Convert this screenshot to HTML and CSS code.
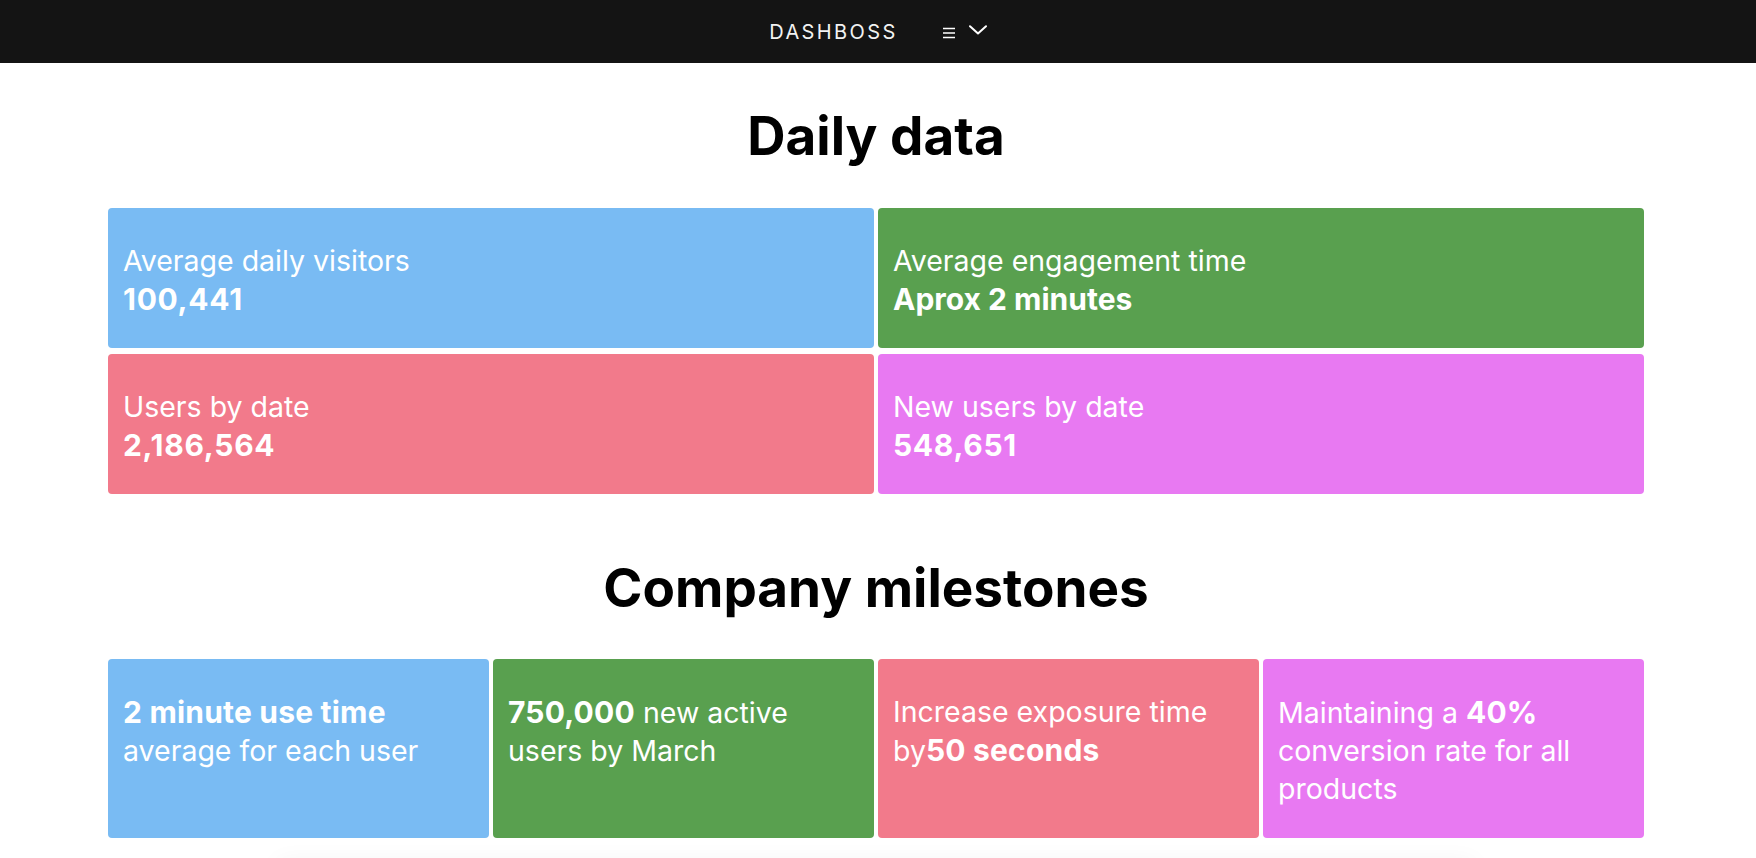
FILE: index.html
```html
<!DOCTYPE html>
<html lang="en">
<head>
<meta charset="utf-8">
<title>Dashboss</title>
<link rel="stylesheet" href="styles.css">
</head>
<body>
<header class="topbar">
  <span class="brand">DASHBOSS</span>
  <span class="menu">
    <svg class="burger" width="12" height="12" viewBox="0 0 12 12"><path d="M0 1.5H12M0 6H12M0 10.5H12" stroke="#fff" stroke-width="1.5" fill="none"/></svg>
    <svg class="chev" width="18" height="10" viewBox="0 0 18 10"><path d="M1 1.2L9 8.5L17 1.2" stroke="#fff" stroke-width="2" fill="none" stroke-linecap="round" stroke-linejoin="round"/></svg>
  </span>
</header>
<main class="page">
  <section class="section section-daily">
    <h1 class="title">Daily data</h1>
    <div class="grid grid-2">
      <div class="card blue"><div>Average daily visitors</div><div class="num">100,441</div></div>
      <div class="card green"><div>Average engagement time</div><div class="num words">Aprox 2 minutes</div></div>
      <div class="card pink"><div>Users by date</div><div class="num">2,186,564</div></div>
      <div class="card purple"><div>New users by date</div><div class="num">548,651</div></div>
    </div>
  </section>
  <section class="section section-miles">
    <h1 class="title">Company milestones</h1>
    <div class="grid grid-4">
      <div class="card blue"><b>2 minute use time</b> average for each user</div>
      <div class="card green"><b class="digits">750,000</b> new active users by March</div>
      <div class="card pink">Increase exposure time by<b class="digits">50 seconds</b></div>
      <div class="card purple">Maintaining a <b class="digits">40%</b> conversion rate for all products</div>
    </div>
  </section>
  <div class="footer-shadow"></div>
</main>
</body>
</html>
```
FILE: styles.css
```css
html, body {
  margin: 0;
  padding: 0;
  background: #ffffff;
  font-family: Inter, "Noto Sans", "Liberation Sans", sans-serif;
  color: #000;
}
.topbar {
  height: 63px;
  background: #141414;
  display: flex;
  align-items: center;
  justify-content: center;
  gap: 45px;
}
.brand {
  color: #f2f2f2;
  font-size: 20px;
  letter-spacing: 2.4px;
  font-weight: 400;
  line-height: 1;
}
.menu {
  display: flex;
  align-items: center;
  gap: 14px;
}
.burger { display: block; margin-top: 3px; }
.chev { display: block; margin-top: -3px; }
.page {
  padding: 0 112px 0 108px;
  overflow: hidden;
}
.section-daily { padding-top: 42px; }
.section-miles { padding-top: 63px; }
.title {
  margin: 0 0 41px 0;
  text-align: center;
  font-size: 53px;
  line-height: 62px;
  font-weight: 700;
}
.section-miles .title { margin-bottom: 40px; }
.grid {
  display: grid;
  column-gap: 4px;
  row-gap: 6px;
}
.grid-2 { grid-template-columns: 1fr 1fr; }
.grid-4 { grid-template-columns: repeat(4, 1fr); }
.card {
  border-radius: 4px;
  color: #ffffff;
  padding: 34px 15px 30px 15px;
  font-size: 28.5px;
  line-height: 38px;
}
.card b, .num {
  font-weight: 700;
  font-size: 30px;
  letter-spacing: 0.2px;
}
.num { letter-spacing: 0.7px; }
.num.words { letter-spacing: 0; }
.digits { letter-spacing: 0.6px; }
.blue { background: #79bbf3; }
.green { background: #59a04f; }
.pink { background: #f27a8b; }
.purple { background: #e879f2; }
.footer-shadow {
  height: 40px;
  margin: 24px 170px 0 170px;
  box-shadow: 0 0 24px rgba(0, 0, 0, 0.05);
}
```
